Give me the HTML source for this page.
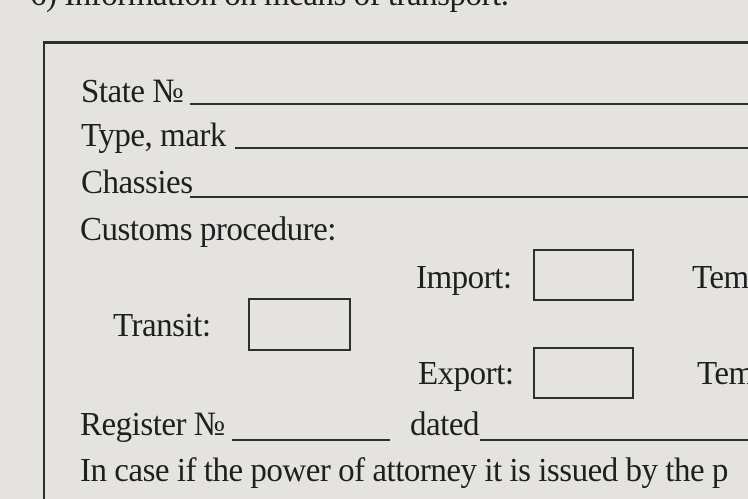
<!DOCTYPE html>
<html><head><style>
html,body{margin:0;padding:0}
body{width:748px;height:499px;overflow:hidden;background:#e5e3df;position:relative;font-family:"Liberation Serif",serif;color:#1f1f1f}
.t{position:absolute;font-size:34px;line-height:1;white-space:nowrap;letter-spacing:-0.5px;transform:scaleX(0.97);transform-origin:0 0}
.l{position:absolute;height:2px;background:#2e2e2e}
.b{position:absolute;border:2px solid #2e2e2e;box-sizing:border-box}
</style></head><body>
<div class="t" style="left:30px;top:-22px">6) Information on means of transport.</div>
<div class="l" style="left:43px;top:41px;width:705px;height:3px"></div>
<div class="l" style="left:43px;top:41px;width:2px;height:458px"></div>
<div class="t" style="left:81px;top:75px">State №</div>
<div class="l" style="left:190px;top:103px;width:558px"></div>
<div class="t" style="left:81px;top:119px">Type, mark</div>
<div class="l" style="left:235px;top:147px;width:513px"></div>
<div class="t" style="left:81px;top:166px">Chassies</div>
<div class="l" style="left:190px;top:196px;width:558px"></div>
<div class="t" style="left:80px;top:213px">Customs procedure:</div>
<div class="t" style="left:416px;top:261px">Import:</div>
<div class="b" style="left:533px;top:249px;width:101px;height:52px"></div>
<div class="t" style="left:692px;top:261px">Tem</div>
<div class="t" style="left:113px;top:309px">Transit:</div>
<div class="b" style="left:248px;top:298px;width:103px;height:53px"></div>
<div class="t" style="left:418px;top:357px">Export:</div>
<div class="b" style="left:533px;top:347px;width:101px;height:52px"></div>
<div class="t" style="left:697px;top:357px">Tem</div>
<div class="t" style="left:80px;top:408px">Register №</div>
<div class="l" style="left:232px;top:439px;width:158px"></div>
<div class="t" style="left:410px;top:408px">dated</div>
<div class="l" style="left:480px;top:439px;width:268px"></div>
<div class="t" style="left:80px;top:454px">In case if the power of attorney it is issued by the p</div>
</body></html>
